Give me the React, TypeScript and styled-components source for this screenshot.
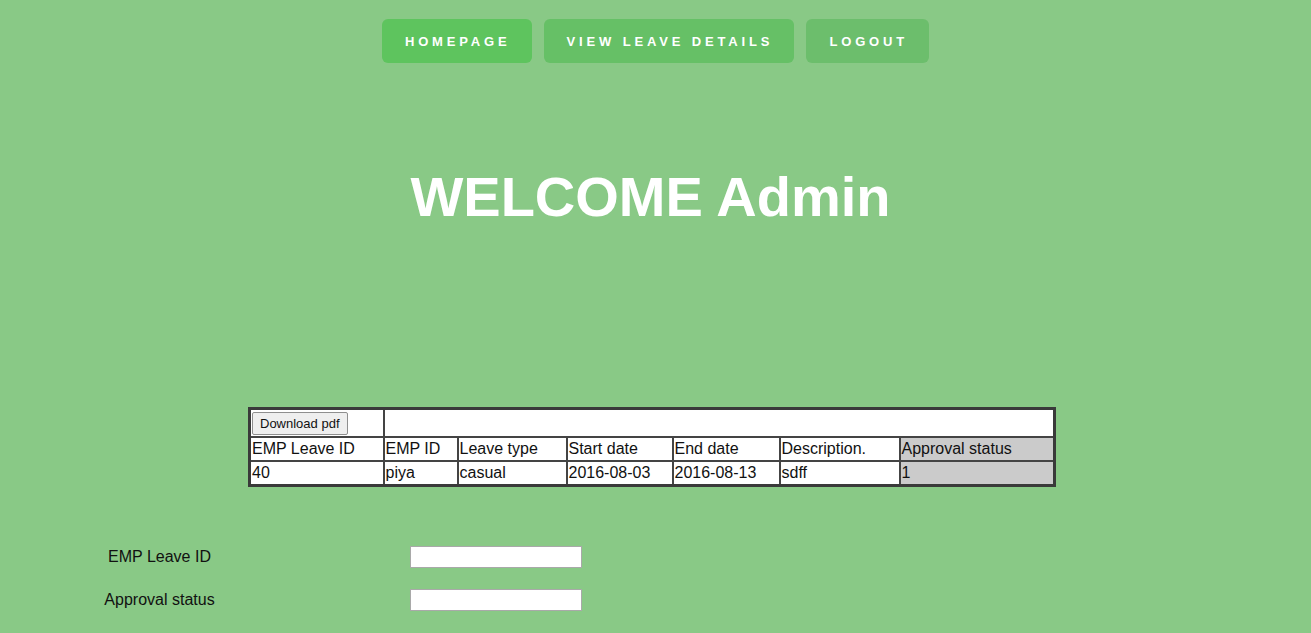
import React from "react";
import styled, { createGlobalStyle } from "styled-components";

const Global = createGlobalStyle`
  html, body { margin: 0; padding: 0; }
  body {
    background: #89c986;
    font-family: "Liberation Sans", Arial, sans-serif;
    min-height: 633px;
  }
`;

const Page = styled.div`
  display: flex;
  flex-direction: column;
  padding-top: 19px;
`;

const Nav = styled.nav`
  display: flex;
  justify-content: center;
  gap: 12px;
`;

const NavButton = styled.a<{ $bg: string }>`
  display: flex;
  align-items: center;
  height: 44px;
  padding: 0 21px 0 23px;
  background: ${(p) => p.$bg};
  border-radius: 6px;
  color: #ffffff;
  font-family: "Liberation Sans", Arial, sans-serif;
  font-weight: 700;
  font-size: 13px;
  letter-spacing: 3.85px;
  text-transform: uppercase;
  text-decoration: none;
`;

const Title = styled.h1`
  margin: 100px 0 0;
  text-align: center;
  color: #ffffff;
  font-size: 56px;
  line-height: 67px;
  font-weight: 700;
  padding-right: 10px;
`;

const Table = styled.table`
  margin: 177px 0 0 248px;
  width: 805px;
  table-layout: fixed;
  border-collapse: collapse;
  border: 3px solid #3a3a3a;
  background: #ffffff;
  font-size: 16px;
  color: #111;
`;

const Cell = styled.td<{ $gray?: boolean }>`
  border: 2px solid #444;
  padding: 0 1px;
  height: 22px;
  line-height: 22px;
  white-space: nowrap;
  overflow: hidden;
  background: ${(p) => (p.$gray ? "#cbcbcb" : "#ffffff")};
`;

const ToolCell = styled.td`
  border: 2px solid #444;
  padding: 1px 1px;
  height: 24px;
`;

const PdfButton = styled.button`
  font-family: "Liberation Sans", Arial, sans-serif;
  font-size: 13px;
  color: #111;
  background: #efefef;
  border: 1px solid #8f8f8f;
  border-radius: 2px;
  padding: 3px 7px;
  height: 23px;
`;

const Form = styled.form`
  display: grid;
  grid-template-columns: 319px 172px;
  column-gap: 91px;
  row-gap: 21px;
  align-items: center;
  margin-top: 59px;
`;

const Label = styled.label`
  text-align: center;
  font-size: 16px;
  color: #111;
`;

const Input = styled.input`
  box-sizing: border-box;
  width: 172px;
  height: 22px;
  border: 1px solid #a9a9a9;
  background: #fff;
  padding: 0 4px;
`;

const widths = [134, 74, 109, 106, 107, 120, 155];
const headers = [
  "EMP Leave ID",
  "EMP ID",
  "Leave type",
  "Start date",
  "End date",
  "Description.",
  "Approval status",
];
const row = ["40", "piya", "casual", "2016-08-03", "2016-08-13", "sdff", "1"];

export default function App() {
  return (
    <>
      <Global />
      <Page>
        <Nav>
          <NavButton href="#" $bg="#5ec45e">Homepage</NavButton>
          <NavButton href="#" $bg="#66c066">View leave details</NavButton>
          <NavButton href="#" $bg="#6cbe6c">Logout</NavButton>
        </Nav>
        <Title>WELCOME Admin</Title>
        <Table>
          <colgroup>
            {widths.map((w, i) => (
              <col key={i} style={{ width: w }} />
            ))}
          </colgroup>
          <tbody>
            <tr>
              <ToolCell>
                <PdfButton type="button">Download pdf</PdfButton>
              </ToolCell>
              <ToolCell colSpan={6} />
            </tr>
            <tr>
              {headers.map((h, i) => (
                <Cell key={h} $gray={i === 6}>{h}</Cell>
              ))}
            </tr>
            <tr>
              {row.map((c, i) => (
                <Cell key={i} $gray={i === 6}>{c}</Cell>
              ))}
            </tr>
          </tbody>
        </Table>
        <Form>
          <Label htmlFor="lid">EMP Leave ID</Label>
          <Input id="lid" />
          <Label htmlFor="ast">Approval status</Label>
          <Input id="ast" />
        </Form>
      </Page>
    </>
  );
}
